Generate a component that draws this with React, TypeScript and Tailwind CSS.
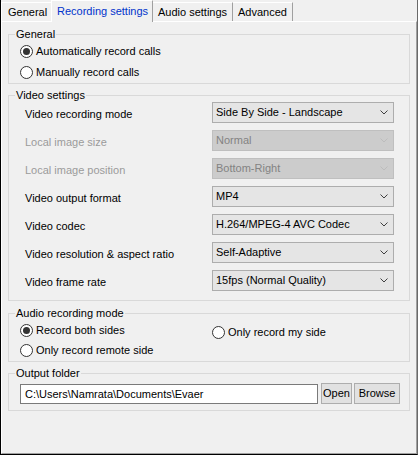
import React from 'react'

const font = "font-['Liberation_Sans',Arial,sans-serif]"

function Radio({ checked, label }: { checked?: boolean; label: string }) {
  return (
    <div className="flex items-center gap-[3px]">
      <span className="w-[13px] h-[13px] rounded-full border border-[#333333] bg-white flex items-center justify-center shrink-0">
        {checked && <span className="w-[7px] h-[7px] rounded-full bg-[#333333]" />}
      </span>
      <span>{label}</span>
    </div>
  )
}

function Combo({ value, disabled }: { value: string; disabled?: boolean }) {
  return (
    <div
      className={
        disabled
          ? 'w-[182px] h-[21px] flex items-center justify-between pl-[3px] pr-[4px] border border-[#bfbfbf] bg-[#cccccc] text-[#838383]'
          : 'w-[182px] h-[21px] flex items-center justify-between pl-[3px] pr-[4px] border border-[#adadad] bg-[#e5e5e5] text-black'
      }
    >
      <span>{value}</span>
      <svg width="8" height="5" viewBox="0 0 8 5" className="mr-[1px]">
        <polyline
          points="0.5,0.5 4,4 7.5,0.5"
          fill="none"
          stroke={disabled ? '#bcbcbc' : '#404040'}
          strokeWidth="1"
        />
      </svg>
    </div>
  )
}

function GroupBox({ title, className, children }: { title: string; className?: string; children: React.ReactNode }) {
  return (
    <fieldset className={'border border-[#d9d9d9] ' + (className ?? '')}>
      <legend className="ml-[6px] px-[1px] leading-[14px]">{title}</legend>
      {children}
    </fieldset>
  )
}

const videoRows = [
  { label: 'Video recording mode', value: 'Side By Side - Landscape' },
  { label: 'Local image size', value: 'Normal', disabled: true },
  { label: 'Local image position', value: 'Bottom-Right', disabled: true },
  { label: 'Video output format', value: 'MP4' },
  { label: 'Video codec', value: 'H.264/MPEG-4 AVC Codec' },
  { label: 'Video resolution & aspect ratio', value: 'Self-Adaptive' },
  { label: 'Video frame rate', value: '15fps (Normal Quality)' },
]

export default function App() {
  return (
    <div className={`w-[418px] h-[455px] bg-[#f0f0f0] border-l border-l-black border-r border-r-[#696969] border-b border-b-black flex flex-col overflow-hidden text-[11px] text-black ${font}`}>
      {/* Tabs */}
      <div className="flex items-end h-[21px] relative z-10">
        <div className="w-[50px] h-[19px] border-t border-l border-white pl-[6px] flex items-center">General</div>
        <div className="w-[102px] h-[22px] -mb-[1px] bg-[#f0f0f0] border-t border-l border-t-white border-l-white border-r border-r-[#a0a0a0] pl-[5px] pb-[1px] flex items-center text-[#0033cc]">
          Recording settings
        </div>
        <div className="w-[80px] h-[19px] border-t border-t-white border-r border-r-[#a0a0a0] pl-[5px] flex items-center">Audio settings</div>
        <div className="w-[60px] h-[19px] border-t border-t-white border-r border-r-[#a0a0a0] pl-[5px] flex items-center">Advanced</div>
      </div>

      {/* Page */}
      <div className="flex-1 border-t border-l border-t-white border-l-white border-r border-b border-r-[#a0a0a0] border-b-[#a0a0a0] px-[6px] pt-[5px]">
        <GroupBox title="General">
          <div className="pl-[11px]">
            <div className="h-[21px] flex items-center">
              <Radio checked label="Automatically record calls" />
            </div>
            <div className="h-[21px] flex items-center">
              <Radio label="Manually record calls" />
            </div>
          </div>
        </GroupBox>

        <GroupBox title="Video settings" className="mt-[4px]">
          <div className="pl-[16px] pb-[2px]">
            {videoRows.map(row => (
              <div key={row.label} className="flex h-[28px]">
                <div className={'w-[187px] h-[21px] pt-[3px] flex items-center ' + (row.disabled ? 'text-[#9b9b9b]' : '')}>
                  {row.label}
                </div>
                <Combo value={row.value} disabled={row.disabled} />
              </div>
            ))}
          </div>
        </GroupBox>

        <GroupBox title="Audio recording mode" className="mt-[5px]">
          <div className="flex pb-[1px]">
            <div className="w-[203px] pl-[11px]">
              <div className="h-[20px] flex items-center">
                <Radio checked label="Record both sides" />
              </div>
              <div className="h-[20px] flex items-center">
                <Radio label="Only record remote side" />
              </div>
            </div>
            <div className="h-[20px] mt-[2px] flex items-center">
              <Radio label="Only record my side" />
            </div>
          </div>
        </GroupBox>

        <GroupBox title="Output folder" className="mt-[4px]">
          <div className="flex items-start pl-[11px] pt-[3px] pb-[6px]">
            <div className="w-[298px] h-[20px] mt-[1px] border border-[#7a7a7a] bg-white pl-[4px] flex items-center">
              {'C:\\Users\\Namrata\\Documents\\Evaer'}
            </div>
            <button className="ml-[3px] w-[31px] h-[21px] border border-[#adadad] bg-[#e1e1e1] flex items-center justify-center">
              Open
            </button>
            <button className="ml-[2px] w-[46px] h-[21px] border border-[#adadad] bg-[#e1e1e1] flex items-center justify-center">
              Browse
            </button>
          </div>
        </GroupBox>
      </div>
    </div>
  )
}
